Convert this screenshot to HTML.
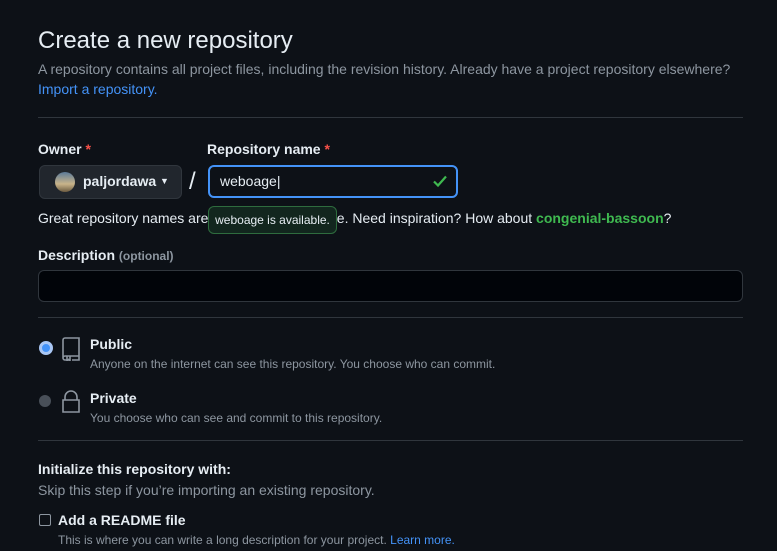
<!DOCTYPE html>
<html><head><style>
body{margin:0;background:#0d1117;color:#e6edf3;font-family:"Liberation Sans",sans-serif;width:777px;height:551px;overflow:hidden;position:relative}
.a{position:absolute;white-space:nowrap}
.m{color:#8d96a0}
.hr{position:absolute;left:38px;width:705px;height:1px;background:#30363d}
b{font-weight:bold}
</style></head><body>
<div class="a" style="left:38px;top:27px;font-size:24px;color:#e6edf3">Create a new repository</div>
<div class="a m" style="left:38px;top:61px;font-size:14px">A repository contains all project files, including the revision history. Already have a project repository elsewhere?</div>
<div class="a" style="left:38px;top:81px;font-size:14px;color:#4493f8">Import a repository.</div>
<div class="hr" style="top:117px"></div>
<div class="a" style="left:38px;top:141px;font-size:14px;font-weight:bold">Owner <span style="color:#f85149">*</span></div>
<div class="a" style="left:207px;top:141px;font-size:14px;font-weight:bold">Repository name <span style="color:#f85149">*</span></div>
<div class="a" style="left:39px;top:165px;width:141px;height:32px;border:1px solid #30363d;border-radius:6px;background:#21262d"></div>
<div class="a" style="left:55px;top:172px;width:20px;height:20px;border-radius:50%;background:linear-gradient(#5b7a99,#c9b48a 60%,#6b5a40)"></div>
<div class="a" style="left:83px;top:173px;font-size:14px;font-weight:bold">paljordawa <span style="font-size:9px;vertical-align:2px">▼</span></div>
<div class="a" style="left:189px;top:168px;font-size:24px;color:#e6edf3">/</div>
<div class="a" style="left:208px;top:165px;width:246px;height:29px;border:2px solid #4493f8;border-radius:6px;background:#0d1117"></div>
<div class="a" style="left:220px;top:173px;font-size:14px">weboage|</div>
<svg class="a" style="left:432px;top:174px" width="16" height="14" viewBox="0 0 16 14"><path d="M2 7.5l4 4L14 2.5" fill="none" stroke="#3fb950" stroke-width="2.2"/></svg>
<div class="a" style="left:38px;top:210px;font-size:14px">Great repository names are short and memorable. Need inspiration? How about <b style="color:#3fb950">congenial-bassoon</b>?</div>
<div class="a" style="left:208px;top:206px;width:127px;height:26px;border:1px solid #2e6c3e;border-radius:6px;background:#12261e;font-size:12px;line-height:26px;text-align:center">weboage is available.</div>
<div class="a" style="left:38px;top:247px;font-size:14px;font-weight:bold">Description <span class="m" style="font-size:12px;font-weight:bold">(optional)</span></div>
<div class="a" style="left:38px;top:270px;width:703px;height:30px;border:1px solid #30363d;border-radius:6px;background:#010409"></div>
<div class="hr" style="top:317px"></div>
<div class="a" style="left:39px;top:341px;width:8px;height:8px;border-radius:50%;background:#4493f8;border:3px solid #a9c7f5"></div>
<svg class="a" style="left:61px;top:337px" width="20" height="24" viewBox="0 0 20 24" fill="none" stroke="#8d96a0" stroke-width="1.6"><path d="M2 3a2 2 0 0 1 2-2h14v18H4a2 2 0 0 0-2 2zM2 21a2 2 0 0 0 2 2h2M11 23h7v-4"/><path d="M6 19v5l1.5-1.5L9 24v-5"/></svg>
<div class="a" style="left:90px;top:336px;font-size:14px;font-weight:bold">Public</div>
<div class="a m" style="left:90px;top:357px;font-size:12px">Anyone on the internet can see this repository. You choose who can commit.</div>
<div class="a" style="left:39px;top:395px;width:12px;height:12px;border-radius:50%;background:#484f58"></div>
<svg class="a" style="left:61px;top:390px" width="20" height="24" viewBox="0 0 20 24" fill="none" stroke="#8d96a0" stroke-width="1.6"><path d="M4 10V7a6 6 0 0 1 12 0v3M2 10h16v12H2z"/></svg>
<div class="a" style="left:90px;top:390px;font-size:14px;font-weight:bold">Private</div>
<div class="a m" style="left:90px;top:411px;font-size:12px">You choose who can see and commit to this repository.</div>
<div class="hr" style="top:440px"></div>
<div class="a" style="left:38px;top:461px;font-size:14px;font-weight:bold">Initialize this repository with:</div>
<div class="a m" style="left:38px;top:482px;font-size:14px">Skip this step if you’re importing an existing repository.</div>
<div class="a" style="left:39px;top:514px;width:10px;height:10px;border:1px solid #8d96a0;border-radius:2px;background:#0d1117"></div>
<div class="a" style="left:58px;top:512px;font-size:14px;font-weight:bold">Add a README file</div>
<div class="a m" style="left:58px;top:533px;font-size:12px">This is where you can write a long description for your project. <span style="color:#4493f8">Learn more.</span></div>
</body></html>
